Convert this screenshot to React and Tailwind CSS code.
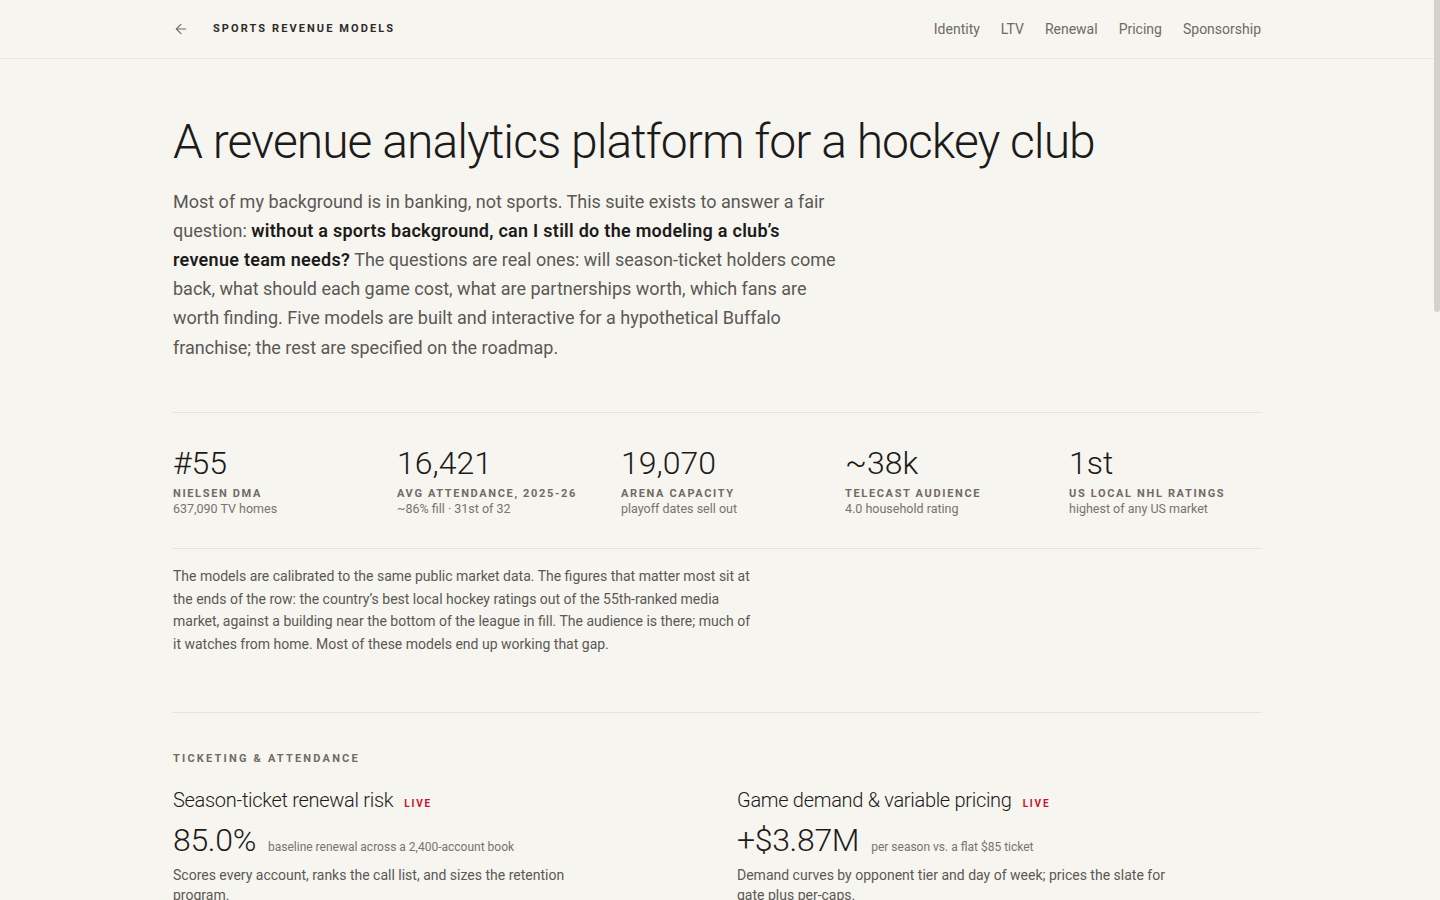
import React from 'react';
import { ArrowLeft } from 'lucide-react';

const stats = [
  { value: '#55', label: 'Nielsen DMA', sub: '637,090 TV homes' },
  { value: '16,421', label: 'Avg attendance, 2025-26', sub: '~86% fill · 31st of 32' },
  { value: '19,070', label: 'Arena capacity', sub: 'playoff dates sell out' },
  { value: '~38k', label: 'Telecast audience', sub: '4.0 household rating' },
  { value: '1st', label: 'US local NHL ratings', sub: 'highest of any US market' },
];

const sections = [
  {
    title: 'Ticketing & attendance',
    models: [
      {
        name: 'Season-ticket renewal risk',
        live: true,
        figure: '85.0%',
        note: 'baseline renewal across a 2,400-account book',
        desc: 'Scores every account, ranks the call list, and sizes the retention program.',
      },
      {
        name: 'Game demand & variable pricing',
        live: true,
        figure: '+$3.87M',
        note: 'per season vs. a flat $85 ticket',
        desc: 'Demand curves by opponent tier and day of week; prices the slate for gate plus per-caps.',
      },
    ],
  },
  {
    title: 'Fans & value',
    models: [
      {
        name: 'Fan identity resolution',
        live: true,
        figure: '61%',
        note: 'of ticket buyers matched to a known household',
        desc: 'Links ticketing, retail and app records into one fan so the other models count people, not rows.',
      },
      {
        name: 'Fan lifetime value',
        live: true,
        figure: '$4,180',
        note: 'median five-year value of a plan holder',
        desc: 'Projects spend by segment and shows which fans are worth the cost of finding.',
      },
    ],
  },
  {
    title: 'Partnerships & media',
    models: [
      {
        name: 'Sponsorship valuation',
        live: true,
        figure: '$1.2M',
        note: 'modeled value of the jersey patch',
        desc: 'Prices in-arena and broadcast exposure against the local ratings the market actually delivers.',
      },
      {
        name: 'Media rights outlook',
        live: false,
        figure: 'Roadmap',
        note: 'specified, not yet built',
        desc: 'Regional rights under a shrinking cable bundle, and what a direct-to-consumer stream could replace.',
      },
    ],
  },
];

const Container = ({ children, className = '' }) => (
  <div className={`mx-auto w-full max-w-[1088px] ${className}`}>{children}</div>
);

const App = () => {
  return (
    <div
      className="flex h-screen overflow-hidden bg-[#f6f5f0] text-[#1c1b1a]"
      style={{ fontFamily: 'Roboto, "Liberation Sans", sans-serif' }}
    >
      <div className="min-w-0 flex-1 overflow-y-auto [scrollbar-width:none]">
        {/* Header */}
        <header className="border-b border-[#e6e4de]">
          <Container className="flex h-[58px] items-center justify-between">
            <div className="flex items-center">
              <ArrowLeft size={16} strokeWidth={1.6} className="text-[#6f6b66]" />
              <span className="ml-[24px] text-[11px] font-bold uppercase tracking-[0.19em] text-[#2d2c2a]">
                Sports Revenue Models
              </span>
            </div>
            <nav className="flex items-center gap-[21px] text-[14px] text-[#6f6a64]">
              <a>Identity</a>
              <a>LTV</a>
              <a>Renewal</a>
              <a>Pricing</a>
              <a>Sponsorship</a>
            </nav>
          </Container>
        </header>

        <main>
          {/* Intro */}
          <Container className="pt-[54px]">
            <h1 className="text-[48px] font-light leading-[1.2] tracking-[-0.02em] text-[#1c1b1a]">
              A revenue analytics platform for a hockey club
            </h1>
            <p className="mt-[16px] max-w-[674px] text-[18px] leading-[29.2px] text-[#5b5854]">
              Most of my background is in banking, not sports. This suite exists to answer a fair question:{' '}
              <strong className="font-semibold tracking-[0.015em] text-[#1c1b1a]">
                without a sports background, can I still do the modeling a club’s revenue team needs?
              </strong>{' '}
              The questions are real ones: will season-ticket holders come back, what should each game cost, what are
              partnerships worth, which fans are worth finding. Five models are built and interactive for a
              hypothetical Buffalo franchise; the rest are specified on the roadmap.
            </p>
          </Container>

          {/* Market stats */}
          <Container className="mt-[50px] border-y border-[#e4e2dc]">
            <div className="grid grid-cols-5 gap-8 pb-[31px] pt-[30px]">
              {stats.map((s) => (
                <div key={s.label}>
                  <div className="text-[32px] font-light leading-[40px] text-[#1c1b1a]">{s.value}</div>
                  <div className="mt-[4px] text-[11px] font-bold uppercase leading-[14px] tracking-[0.15em] text-[#6f6a64]">
                    {s.label}
                  </div>
                  <div className="mt-0 text-[12.5px] leading-[16px] text-[#78736d]">{s.sub}</div>
                </div>
              ))}
            </div>
          </Container>

          <Container>
            <p className="max-w-[586px] pb-[56px] pt-[16px] text-[14px] leading-[22.7px] text-[#5b5854]">
              The models are calibrated to the same public market data. The figures that matter most sit at the ends
              of the row: the country’s best local hockey ratings out of the 55th-ranked media market, against a
              building near the bottom of the league in fill. The audience is there; much of it watches from home.
              Most of these models end up working that gap.
            </p>
          </Container>

          {/* Model sections */}
          {sections.map((sec) => (
            <Container key={sec.title} className="border-t border-[#e4e2dc] pb-[40px] pt-[39px]">
              <h2 className="text-[11px] font-bold uppercase leading-[14px] tracking-[0.2em] text-[#6f6a64]">
                {sec.title}
              </h2>
              <div className="mt-[20px] grid grid-cols-2 gap-x-10 gap-y-12">
                {sec.models.map((m) => (
                  <div key={m.name}>
                    <div className="flex items-baseline gap-[11px]">
                      <h3 className="text-[20px] font-light leading-[28px] tracking-[-0.015em] text-[#1c1b1a]">
                        {m.name}
                      </h3>
                      {m.live && (
                        <span className="text-[10px] font-bold uppercase tracking-[0.18em] text-[#c8102e]">Live</span>
                      )}
                    </div>
                    <div className="mt-[6px] flex items-baseline gap-[12px]">
                      <span className="text-[32px] font-light leading-[40px] tracking-[-0.01em] text-[#1c1b1a]">
                        {m.figure}
                      </span>
                      <span className="text-[12px] text-[#78736d]">{m.note}</span>
                    </div>
                    <p className="mt-[5px] max-w-[440px] text-[14px] leading-[20.5px] text-[#5b5854]">{m.desc}</p>
                    <div className="mt-[14px] text-[13px] text-[#1c1b1a] underline decoration-[#c9c5be] underline-offset-4">
                      Open the model →
                    </div>
                  </div>
                ))}
              </div>
            </Container>
          ))}

          <Container className="border-t border-[#e4e2dc] pb-[80px] pt-[38px]">
            <h2 className="text-[11px] font-bold uppercase leading-[14px] tracking-[0.2em] text-[#6f6a64]">
              Roadmap
            </h2>
            <ul className="mt-[20px] max-w-[592px] space-y-[10px] text-[14px] leading-[22px] text-[#5b5854]">
              <li>Premium seating and suite renewal forecasting</li>
              <li>Concessions and merchandise per-cap modeling by game type</li>
              <li>Digital audience growth and streaming subscriber value</li>
              <li>Group sales lead scoring for the regional market</li>
            </ul>
          </Container>
        </main>
      </div>

      {/* Thin scrollbar */}
      <div className="w-[6px] shrink-0">
        <div className="h-[312px] rounded-b-full bg-[#d5d2cc]" />
      </div>
    </div>
  );
};

export default App;
